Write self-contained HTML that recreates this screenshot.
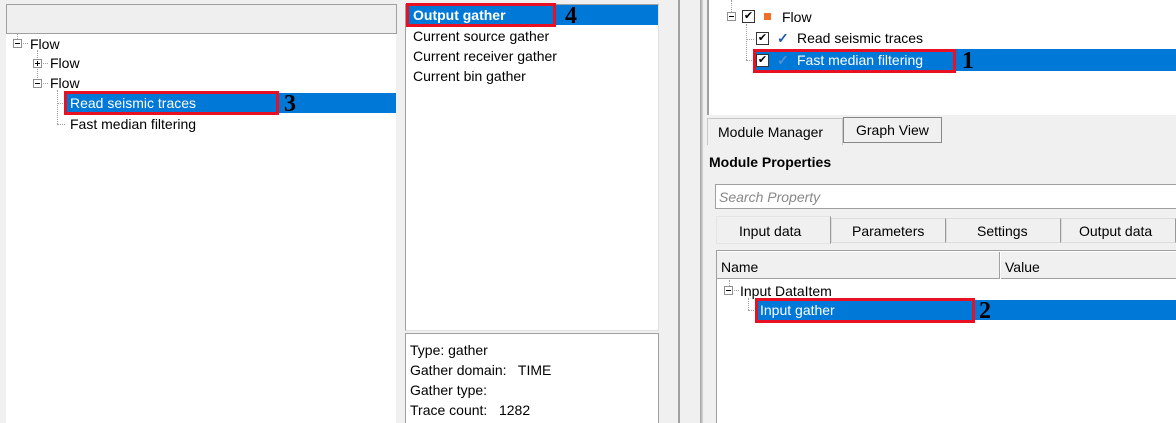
<!DOCTYPE html><html><head><style>
*{margin:0;padding:0;box-sizing:border-box}
html,body{width:1176px;height:423px;overflow:hidden}
body{background:#f0f0f0;position:relative;font-family:"Liberation Sans",sans-serif;font-size:14px;color:#000}
.a{position:absolute}
.t{position:absolute;white-space:nowrap;line-height:20px}
.sel{background:#0078d7;color:#fff}
.red{position:absolute;border:3px solid #e81123}
.num{position:absolute;font-family:"Liberation Serif",serif;font-weight:bold;font-size:24px;line-height:22px;color:#000}
.box{position:absolute;width:9px;height:9px;border:1px solid #919191;background:#fff}
.box:after{content:"";position:absolute;left:1px;top:3px;width:5px;height:1px;background:#000}
.plus:before{content:"";position:absolute;left:3px;top:1px;width:1px;height:5px;background:#000}
.dv{position:absolute;border-left:1px dotted #a0a0a0}
.dh{position:absolute;border-top:1px dotted #a0a0a0}
.cb{position:absolute;width:13px;height:13px;border:1px solid #333;background:#fff;font-size:11px;line-height:11px;text-align:center}
</style></head><body>
<div class="a" style="left:6px;top:4px;width:391px;height:30px;border:1px solid #a0a0a0;background:#efefef"></div>
<div class="a" style="left:6px;top:34px;width:390px;height:389px;background:#fff"></div>
<div class="dv" style="left:17px;top:34px;height:5px"></div>
<div class="box" style="left:13px;top:39px"></div><div class="dh" style="left:23px;top:43px;width:5px"></div>
<div class="t" style="left:30px;top:34px">Flow</div>
<div class="dv" style="left:37px;top:50px;height:30px"></div>
<div class="box plus" style="left:33px;top:59px"></div><div class="dh" style="left:43px;top:63px;width:5px"></div>
<div class="t" style="left:50px;top:53px">Flow</div>
<div class="box" style="left:33px;top:79px"></div><div class="dh" style="left:43px;top:83px;width:5px"></div>
<div class="t" style="left:50px;top:73px">Flow</div>
<div class="dv" style="left:57px;top:90px;height:34px"></div>
<div class="dh" style="left:57px;top:103px;width:8px"></div>
<div class="dh" style="left:57px;top:124px;width:8px"></div>
<div class="a sel" style="left:65px;top:93px;width:331px;height:20px"></div>
<div class="t" style="left:70px;top:93px;color:#fff">Read seismic traces</div>
<div class="red" style="left:64px;top:91px;width:215px;height:24px"></div>
<div class="num" style="left:284px;top:93px">3</div>
<div class="t" style="left:70px;top:114px">Fast median filtering</div>
<div class="a" style="left:405px;top:4px;width:254px;height:327px;background:#fff;border:1px solid #a0a0a0;border-right-color:#e0e0e0;border-bottom-color:#e0e0e0"></div>
<div class="a sel" style="left:407px;top:5px;width:251px;height:20px"></div>
<div class="t" style="left:413px;top:5px;color:#fff;font-weight:bold">Output gather</div>
<div class="red" style="left:406px;top:3px;width:150px;height:24px"></div>
<div class="num" style="left:565px;top:5px">4</div>
<div class="t" style="left:413px;top:26px">Current source gather</div>
<div class="t" style="left:413px;top:46px">Current receiver gather</div>
<div class="t" style="left:413px;top:66px">Current bin gather</div>
<div class="a" style="left:405px;top:333px;width:254px;height:90px;background:#fff;border:1px solid #a0a0a0;border-bottom:none"></div>
<div class="t" style="left:410px;top:340px">Type: gather</div>
<div class="t" style="left:410px;top:360px">Gather domain:&nbsp;&nbsp; TIME</div>
<div class="t" style="left:410px;top:380px">Gather type:</div>
<div class="t" style="left:410px;top:400px">Trace count:&nbsp;&nbsp; 1282</div>
<div class="a" style="left:678px;top:0;width:2px;height:423px;background:#a0a0a0"></div>
<div class="a" style="left:700px;top:0;width:3px;height:423px;background:linear-gradient(90deg,#a0a0a0,#d8d8d8)"></div>
<div class="a" style="left:707px;top:0;width:469px;height:115px;background:#fff;border-left:2px solid #a0a0a0"></div>
<div class="dv" style="left:731px;top:0;height:12px"></div>
<div class="box" style="left:727px;top:12px"></div>
<div class="cb" style="left:742px;top:10px">✔</div>
<div class="a" style="left:764px;top:13px;width:7px;height:7px;background:#ee7026"></div>
<div class="t" style="left:782px;top:7px">Flow</div>
<div class="dv" style="left:746px;top:24px;height:36px"></div>
<div class="dh" style="left:746px;top:39px;width:8px"></div>
<div class="dh" style="left:746px;top:60px;width:8px"></div>
<div class="cb" style="left:756px;top:32px">✔</div>
<div class="t" style="left:777px;top:28px;color:#1e5aa8;font-weight:bold">✓</div>
<div class="t" style="left:797px;top:28px">Read seismic traces</div>
<div class="a sel" style="left:753px;top:49px;width:423px;height:22px"></div>
<div class="cb" style="left:756px;top:54px">✔</div>
<div class="t" style="left:777px;top:50px;color:#5590d0;font-weight:bold">✓</div>
<div class="t" style="left:797px;top:50px;color:#fff">Fast median filtering</div>
<div class="red" style="left:753px;top:49px;width:203px;height:24px"></div>
<div class="num" style="left:962px;top:50px">1</div>
<div class="a" style="left:707px;top:118px;width:136px;height:27px;background:#f0f0f0;border:1px solid #c8c8c8;border-bottom:none"></div>
<div class="t" style="left:718px;top:122px">Module Manager</div>
<div class="a" style="left:843px;top:117px;width:99px;height:26px;background:#f0f0f0;border:1px solid #888"></div>
<div class="t" style="left:856px;top:120px">Graph View</div>
<div class="t" style="left:709px;top:152px;font-weight:bold">Module Properties</div>
<div class="a" style="left:715px;top:184px;width:461px;height:25px;background:#fff;border:1px solid #a0a0a0;border-right:none"></div>
<div class="t" style="left:719px;top:187px;color:#888;font-style:italic">Search Property</div>
<div class="a" style="left:716px;top:216px;width:115px;height:28px;background:#f0f0f0;border:1px solid #e4e4e4;border-right:1px solid #999"></div>
<div class="t" style="left:739px;top:221px">Input data</div>
<div class="a" style="left:831px;top:218px;width:115px;height:25px;background:#f0f0f0;border:1px solid #ddd;border-right:1px solid #999"></div>
<div class="t" style="left:852px;top:221px">Parameters</div>
<div class="a" style="left:946px;top:218px;width:115px;height:25px;background:#f0f0f0;border:1px solid #ddd;border-right:1px solid #999"></div>
<div class="t" style="left:977px;top:221px">Settings</div>
<div class="a" style="left:1061px;top:218px;width:115px;height:25px;background:#f0f0f0;border:1px solid #ddd;border-right:1px solid #999"></div>
<div class="t" style="left:1079px;top:221px">Output data</div>
<div class="a" style="left:716px;top:250px;width:460px;height:173px;background:#fff;border:1px solid #a0a0a0;border-right:none;border-bottom:none"></div>
<div class="a" style="left:717px;top:252px;width:283px;height:27px;background:#f0f0f0;border-right:1px solid #a0a0a0;border-bottom:1px solid #a0a0a0"></div>
<div class="a" style="left:1001px;top:252px;width:175px;height:27px;background:#f0f0f0;border-bottom:1px solid #a0a0a0"></div>
<div class="t" style="left:721px;top:257px">Name</div>
<div class="t" style="left:1005px;top:257px">Value</div>
<div class="dv" style="left:729px;top:280px;height:6px"></div>
<div class="box" style="left:724px;top:286px"></div><div class="dh" style="left:734px;top:290px;width:5px"></div>
<div class="t" style="left:740px;top:281px">Input DataItem</div>
<div class="dv" style="left:748px;top:298px;height:12px"></div>
<div class="dh" style="left:748px;top:310px;width:6px"></div>
<div class="a sel" style="left:755px;top:300px;width:421px;height:20px"></div>
<div class="t" style="left:760px;top:300px;color:#fff">Input gather</div>
<div class="red" style="left:755px;top:298px;width:220px;height:25px"></div>
<div class="num" style="left:979px;top:300px">2</div>
</body></html>
